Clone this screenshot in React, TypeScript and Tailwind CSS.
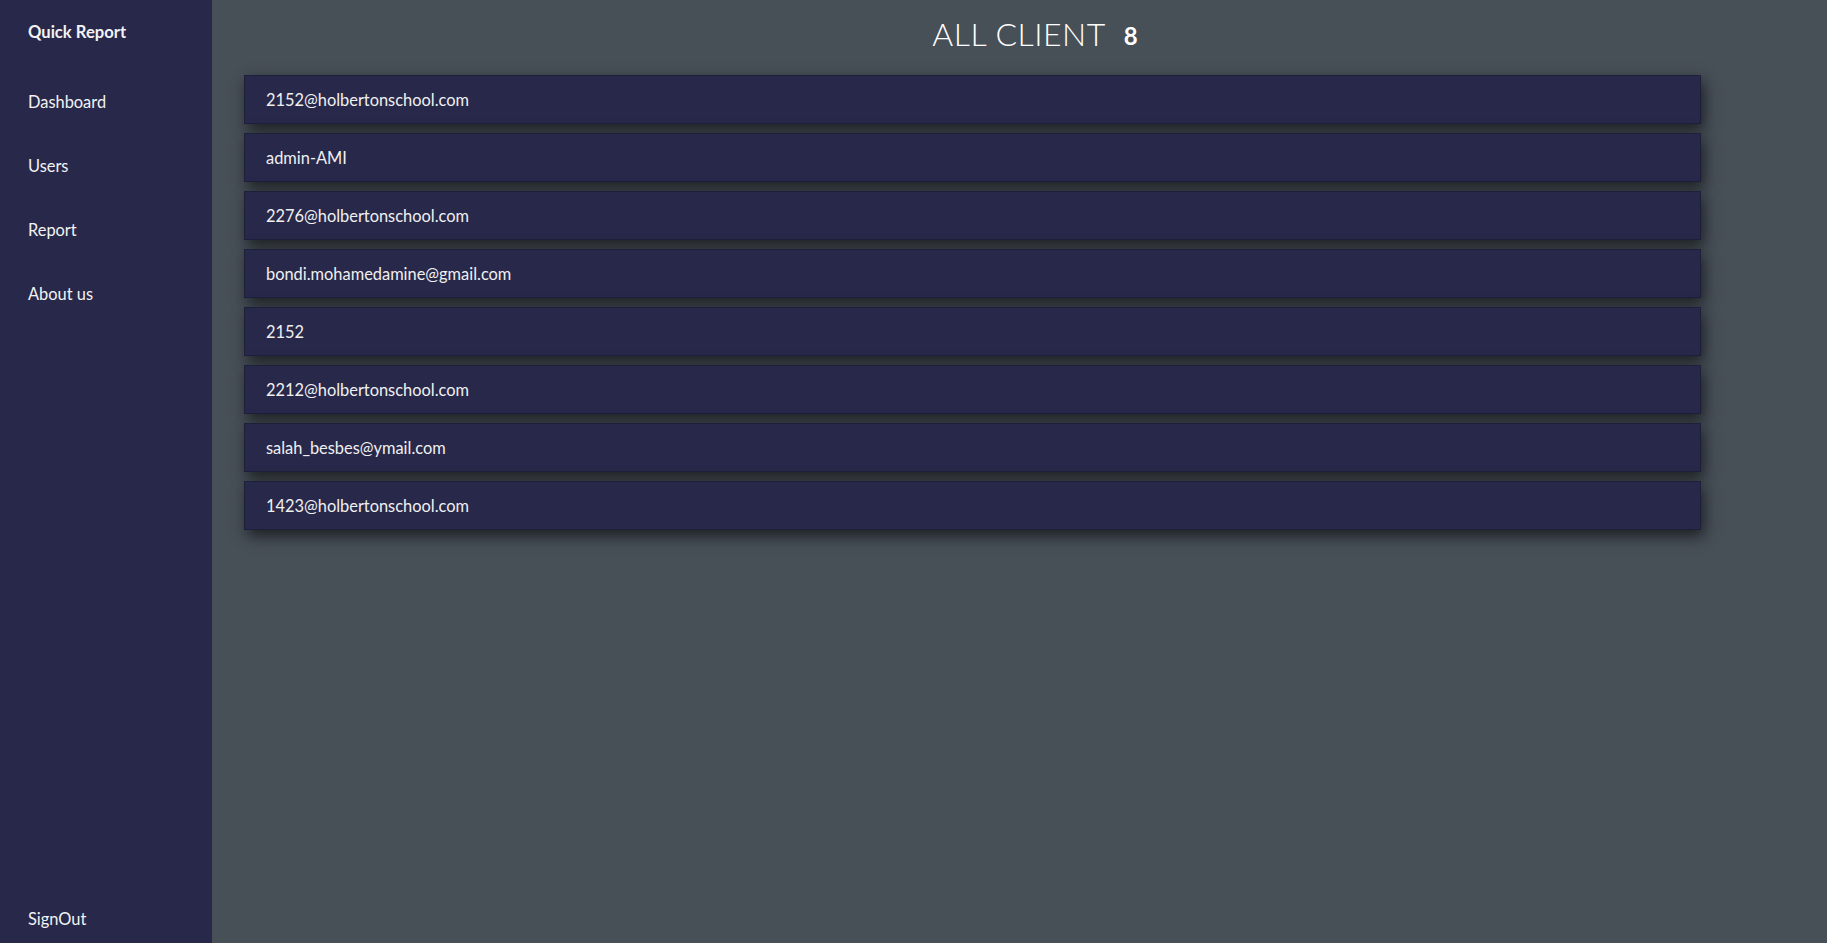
const clients = [
  "2152@holbertonschool.com",
  "admin-AMI",
  "2276@holbertonschool.com",
  "bondi.mohamedamine@gmail.com",
  "2152",
  "2212@holbertonschool.com",
  "salah_besbes@ymail.com",
  "1423@holbertonschool.com",
];

const links = ["Dashboard", "Users", "Report", "About us"];

function Sidebar() {
  return (
    <aside className="w-[212px] shrink-0 bg-[#27284a] text-[#f3f3f3] flex flex-col pl-[28px]">
      <div className="h-[61px] flex items-center pt-[3px] text-[16.6px] font-bold">
        Quick Report
      </div>
      <nav className="flex flex-col mt-[9px]">
        {links.map((l) => (
          <a key={l} className="h-[64px] flex items-center text-[16.4px] cursor-pointer">
            {l}
          </a>
        ))}
      </nav>
      <div className="mt-auto h-[48px] flex items-center text-[16.4px]">SignOut</div>
    </aside>
  );
}

export default function App() {
  return (
    <div
      className="flex h-[943px] w-full overflow-hidden bg-[#474f57]"
      style={{ fontFamily: "Lato, 'Noto Sans', sans-serif" }}
    >
      <Sidebar />
      <main className="flex-1 flex flex-col">
        <h1 className="h-[68px] flex items-center justify-center pl-[31px] text-white">
          <span className="text-[32px] font-light tracking-[0.5px]">ALL CLIENT</span>
          <span className="ml-[18px] text-[24px] font-bold mt-[4px]">8</span>
        </h1>
        <ul className="ml-[32px] w-[1457px] flex flex-col gap-[9px] mt-[7px]">
          {clients.map((c, i) => (
            <li
              key={i}
              className="h-[49px] flex items-center pl-[21px] pt-[2px] bg-[#28284a] border border-[#1e1f3a] text-[#f0f0f0] text-[16.4px] shadow-[3px_6px_14px_rgba(0,0,0,0.6)]"
            >
              {c}
            </li>
          ))}
        </ul>
      </main>
    </div>
  );
}
